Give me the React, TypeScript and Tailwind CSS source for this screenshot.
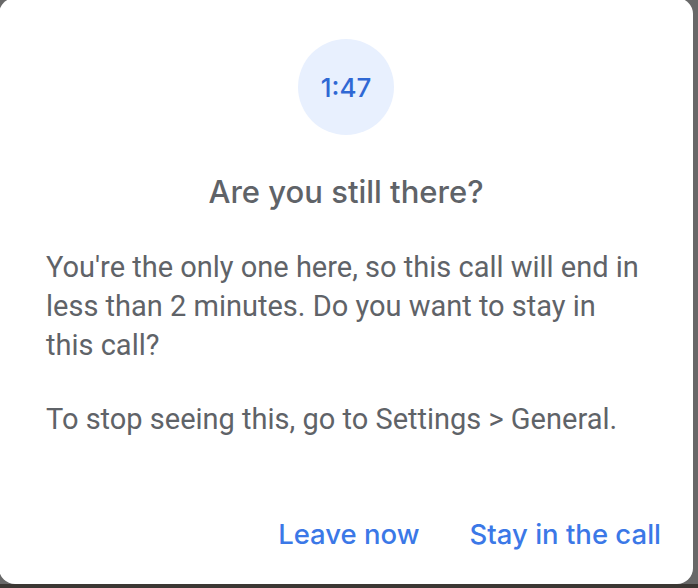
export default function App() {
  return (
    <div className="w-[698px] h-[588px] overflow-hidden bg-[linear-gradient(to_bottom,#686868_584px,#3b3733_584px)]">
      <div className="-mt-[2px] -ml-[1px] w-[694px] h-[586px] rounded-[16px] bg-white flex flex-col pt-[41px] px-[47px]">
        <div className="self-center w-[96px] h-[96px] rounded-full bg-[#e8f0fe] flex items-center justify-center text-[#2f68d4] text-[26px] font-medium font-['Inter',sans-serif]">
          1:47
        </div>
        <h2 className="mt-[39px] text-center text-[31px] leading-[36px] font-medium text-[#5f6368] font-['Inter',sans-serif]">
          Are you still there?
        </h2>
        <p className="mt-[38px] text-[29px] leading-[39px] text-[#5f6368] font-['Roboto',sans-serif]">
          You're the only one here, so this call will end in less than 2 minutes. Do you want to stay in this call?
        </p>
        <p className="mt-[35px] text-[29px] leading-[39px] text-[#5f6368] font-['Roboto',sans-serif]">
          To stop seeing this, go to Settings &gt; General.
        </p>
        <div className="mt-auto mb-[26px] -mr-[15px] flex justify-end gap-[50px] text-[27.5px] leading-[48px] font-medium text-[#3b78e7] font-['Inter',sans-serif]">
          <button>Leave now</button>
          <button>Stay in the call</button>
        </div>
      </div>
    </div>
  );
}
